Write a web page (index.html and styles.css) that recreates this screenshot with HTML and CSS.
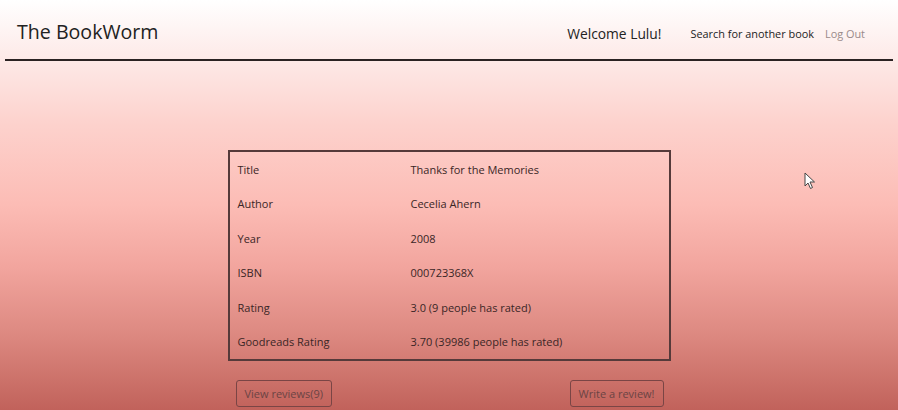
FILE: index.html
```html
<!DOCTYPE html>
<html>
<head>
<meta charset="utf-8">
<link rel="stylesheet" href="styles.css">
</head>
<body>
<div class="page">
  <header class="topbar">
    <div class="brand">The BookWorm</div>
    <nav class="nav">
      <span class="welcome">Welcome Lulu!</span>
      <a class="nav-link">Search for another book</a>
      <a class="nav-link muted">Log Out</a>
    </nav>
  </header>
  <main class="content">
    <div class="book">
      <table class="details">
        <tr><td class="key">Title</td><td>Thanks for the Memories</td></tr>
        <tr><td class="key">Author</td><td>Cecelia Ahern</td></tr>
        <tr><td class="key">Year</td><td>2008</td></tr>
        <tr><td class="key">ISBN</td><td>000723368X</td></tr>
        <tr><td class="key">Rating</td><td>3.0 (9 people has rated)</td></tr>
        <tr><td class="key">Goodreads Rating</td><td>3.70 (39986 people has rated)</td></tr>
      </table>
      <div class="actions">
        <button class="btn">View reviews(9)</button>
        <button class="btn">Write a review!</button>
      </div>
    </div>
  </main>
  <svg class="cursor" width="12" height="18" viewBox="0 0 12 18"><path d="M1 1 L1 14 L4 11 L6.5 16.5 L8.5 15.5 L6 10 L10.5 10 Z" fill="#fff" stroke="#444" stroke-width="1"/></svg>
</div>
</body>
</html>
```

FILE: styles.css
```css
html, body {
  margin: 0;
  padding: 0;
  height: 100%;
}
body {
  font-family: "Open Sans", "Noto Sans", sans-serif;
  color: #2b2222;
  background: linear-gradient(to bottom, #ffffff 0%, #fdeae8 14%, #fdd2cd 30%, #fcbcb5 50%, #f2a59e 65%, #dc8880 82%, #c1625b 100%);
  overflow: hidden;
}
.page {
  position: relative;
  height: 410px;
  padding: 0 5px;
}
.topbar {
  height: 59px;
  border-bottom: 2px solid #2a2222;
  display: flex;
  align-items: center;
  justify-content: space-between;
  padding: 0 28px 0 12px;
  box-sizing: content-box;
}
.brand {
  font-size: 19.6px;
  color: #222;
  margin-top: 3px;
}
.nav {
  display: flex;
  align-items: center;
  margin-top: 7px;
}
.welcome {
  font-size: 13.8px;
  color: #222;
  margin-right: 29px;
}
.nav-link {
  font-size: 10.9px;
  color: #222;
  margin-right: 11px;
}
.nav-link.muted {
  color: #9a8a8a;
  margin-right: 0;
}
.content {
  display: flex;
  justify-content: center;
  padding-top: 89px;
}
.book {
  width: 443px;
}
.details {
  width: 100%;
  border: 2px solid #553a3a;
  border-collapse: collapse;
  font-size: 11px;
  color: #3a2626;
}
.details td {
  height: 34.5px;
  padding: 0 8px;
  vertical-align: middle;
}
.details td.key {
  width: 157px;
}
.actions {
  display: flex;
  justify-content: space-between;
  padding: 19px 7px 0 8px;
}
.btn {
  font-family: "Open Sans", "Noto Sans", sans-serif;
  font-size: 11px;
  color: #6b4444;
  background: transparent;
  border: 1px solid #7a4545;
  border-radius: 3px;
  height: 27px;
  padding: 0 8px;
}
.cursor {
  position: absolute;
  left: 804px;
  top: 172px;
}
```
